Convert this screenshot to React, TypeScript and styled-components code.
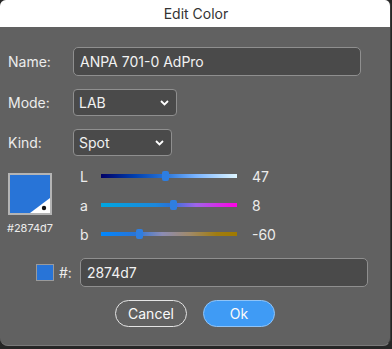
import React, { FC } from "react";
import styled, { createGlobalStyle } from "styled-components";

const BLUE = "#2874d7";

const GlobalStyle = createGlobalStyle`
  html, body {
    margin: 0;
    padding: 0;
    background: #262626;
    font-family: Inter, "Noto Sans", "Liberation Sans", sans-serif;
  }
`;

interface SliderProps {
  label: string;
  value: number;
  gradient: string;
  thumb: number;
}

const Slider: FC<SliderProps> = ({ label, value, gradient, thumb }) => (
  <SliderRow>
    <SliderLabel>{label}</SliderLabel>
    <Track $gradient={gradient}>
      <Thumb style={{ left: thumb }} />
    </Track>
    <SliderValue>{value}</SliderValue>
  </SliderRow>
);

const Chevron = () => (
  <svg width="9" height="6" viewBox="0 0 9 6">
    <path d="M1 1 L4.5 4.5 L8 1" stroke="#fff" strokeWidth="1.8" fill="none" />
  </svg>
);

const App: FC = () => (
  <>
    <GlobalStyle />
    <Window>
      <TitleBar>Edit Color</TitleBar>
      <Body>
        <FieldRow>
          <Label>Name:</Label>
          <TextInput $width={288}>ANPA 701-0 AdPro</TextInput>
        </FieldRow>
        <FieldRow>
          <Label>Mode:</Label>
          <Select $width={104}>
            LAB
            <Chevron />
          </Select>
        </FieldRow>
        <FieldRow>
          <Label>Kind:</Label>
          <Select $width={99}>
            Spot
            <Chevron />
          </Select>
        </FieldRow>

        <ColorSection>
          <SwatchColumn>
            <Swatch>
              <svg width="40" height="38" viewBox="0 0 40 38">
                <polygon points="20,38 40,38 40,23" fill="#fff" />
                <circle cx="34" cy="33" r="2.2" fill="#111" />
              </svg>
            </Swatch>
            <HexCaption>#2874d7</HexCaption>
          </SwatchColumn>
          <Sliders>
            <Slider
              label="L"
              value={47}
              thumb={61}
              gradient="linear-gradient(90deg, #000066 0%, #0040b0 25%, #2874d7 47%, #7ab4ff 70%, #dff6ff 100%)"
            />
            <Slider
              label="a"
              value={8}
              thumb={69}
              gradient="linear-gradient(90deg, #00a6e0 0%, #1c88dc 40%, #2874d7 50%, #a064e8 70%, #ff00e6 100%)"
            />
            <Slider
              label="b"
              value={-60}
              thumb={35}
              gradient="linear-gradient(90deg, #0088ff 0%, #2874d7 25%, #8c8cb4 45%, #a08a6a 65%, #a07c10 85%, #a07a00 100%)"
            />
          </Sliders>
        </ColorSection>

        <HexRow>
          <MiniSwatch />
          <HashLabel>#:</HashLabel>
          <TextInput $width={288}>2874d7</TextInput>
        </HexRow>

        <Buttons>
          <Button>Cancel</Button>
          <Button $primary>Ok</Button>
        </Buttons>
      </Body>
    </Window>
  </>
);

const Window = styled.div`
  width: 390px;
  height: 345px;
  background: #616161;
  border-right: 1px solid #3a3a3a;
  border-bottom: 1px solid #7a7a7a;
  border-radius: 6px 6px 8px 8px;
  overflow: hidden;
  display: flex;
  flex-direction: column;
`;

const TitleBar = styled.div`
  height: 27px;
  flex-shrink: 0;
  background: #fff;
  color: #333;
  font-size: 14px;
  display: flex;
  align-items: center;
  justify-content: center;
  padding-left: 2px;
`;

const Body = styled.div`
  display: flex;
  flex-direction: column;
  padding: 20px 0 0 8px;
`;

const FieldRow = styled.div`
  display: flex;
  align-items: center;
  margin-bottom: 13px;
`;

const Label = styled.div`
  width: 65px;
  color: #ececec;
  font-size: 14px;
`;

const TextInput = styled.div<{ $width: number }>`
  width: ${(p) => p.$width}px;
  height: 29px;
  box-sizing: border-box;
  border: 1px solid #8f8f8f;
  border-radius: 5px;
  background: #4a4a4a;
  color: #f2f2f2;
  font-size: 14px;
  display: flex;
  align-items: center;
  padding-left: 6px;
`;

const Select = styled.div<{ $width: number }>`
  width: ${(p) => p.$width}px;
  height: 27px;
  box-sizing: border-box;
  border: 1px solid #8f8f8f;
  border-radius: 4px;
  background: #4a4a4a;
  color: #f2f2f2;
  font-size: 14px;
  display: flex;
  align-items: center;
  justify-content: space-between;
  padding: 0 7px 0 5px;
`;

const ColorSection = styled.div`
  display: flex;
  align-items: flex-start;
  margin-top: 4px;
`;

const SwatchColumn = styled.div`
  display: flex;
  flex-direction: column;
  align-items: center;
  width: 48px;
`;

const Swatch = styled.div`
  width: 44px;
  height: 42px;
  box-sizing: border-box;
  border: 2px solid #b4b4b4;
  background: ${BLUE};
  display: flex;
  margin-left: -4px;
  svg {
    display: block;
  }
`;

const HexCaption = styled.div`
  margin-top: 6px;
  margin-left: -4px;
  color: #ececec;
  font-size: 11px;
`;

const Sliders = styled.div`
  display: flex;
  flex-direction: column;
  gap: 9px;
  margin: -7px 0 0 24px;
`;

const SliderRow = styled.div`
  display: flex;
  align-items: center;
  height: 20px;
`;

const SliderLabel = styled.div`
  width: 21px;
  color: #ececec;
  font-size: 14px;
`;

const Track = styled.div<{ $gradient: string }>`
  position: relative;
  width: 136px;
  height: 4px;
  background: ${(p) => p.$gradient};
`;

const Thumb = styled.div`
  position: absolute;
  top: -3px;
  width: 7px;
  height: 10px;
  border-radius: 2px;
  background: #2e7ee0;
`;

const SliderValue = styled.div`
  margin-left: 15px;
  color: #ececec;
  font-size: 14px;
`;

const HexRow = styled.div`
  display: flex;
  align-items: center;
  margin-top: 14px;
  padding-left: 28px;
`;

const MiniSwatch = styled.div`
  width: 18px;
  height: 17px;
  box-sizing: border-box;
  border: 1px solid #9a9a9a;
  background: ${BLUE};
`;

const HashLabel = styled.div`
  color: #ececec;
  font-size: 14px;
  margin: 0 8px 0 5px;
`;

const Buttons = styled.div`
  display: flex;
  justify-content: center;
  gap: 16px;
  margin-top: 13px;
  padding-right: 8px;
`;

const Button = styled.div<{ $primary?: boolean }>`
  width: 72px;
  height: 27px;
  box-sizing: border-box;
  border-radius: 14px;
  border: 1px solid ${(p) => (p.$primary ? "#8fc4f8" : "#e4e4e4")};
  background: ${(p) => (p.$primary ? "#3f9bf5" : "transparent")};
  color: #fafafa;
  font-size: 14px;
  display: flex;
  align-items: center;
  justify-content: center;
`;

export default App;
